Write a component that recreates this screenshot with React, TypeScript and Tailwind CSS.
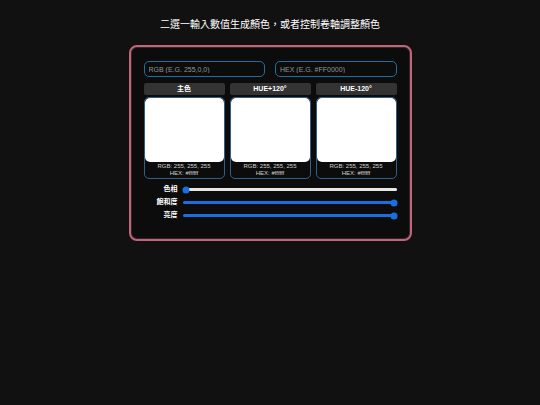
import { useState } from "react";

const FONT = { fontFamily: '"Liberation Sans", "Noto Sans CJK TC", sans-serif' };

interface Swatch {
    label: string;
    rgb: [number, number, number];
}

function toHex([r, g, b]: [number, number, number]) {
    return "#" + [r, g, b].map((v) => v.toString(16).padStart(2, "0")).join("");
}

function ColorCard({ swatch }: { swatch: Swatch }) {
    return (
        <div className="flex flex-col gap-[2px]">
            <div className="h-[12px] rounded-[2px] bg-[#333333] flex items-center justify-center text-[7px] font-bold text-white">
                {swatch.label}
            </div>
            <div className="h-[82px] rounded-[5px] border border-[#325e8a] flex flex-col">
                <div className="h-[64px] rounded-[5px] bg-white" style={{ backgroundColor: toHex(swatch.rgb) }} />
                <div className="flex-1 flex flex-col items-center justify-center text-[6px] leading-[7px] text-[#d0d0d0]">
                    <div>RGB: {swatch.rgb.join(", ")}</div>
                    <div>HEX: {toHex(swatch.rgb)}</div>
                </div>
            </div>
        </div>
    );
}

function Slider({ label, value, light }: { label: string; value: number; light?: boolean }) {
    return (
        <div className="flex items-center h-[13px]">
            <div className="w-[54px] pr-[5px] text-right text-[7px] font-semibold text-white">{label}</div>
            <div className="relative flex-1 h-[3px] rounded-full bg-[#1a6ee0]">
                {light && (
                    <div className="absolute inset-0 rounded-full bg-[#e6e6e6]" style={{ left: `${value}%` }} />
                )}
                <div
                    className="absolute top-1/2 w-[7px] h-[7px] -translate-x-1/2 -translate-y-1/2 rounded-full bg-[#1a6ee0]"
                    style={{ left: `calc(${value}% + ${value === 0 ? 3 : -3}px)` }}
                />
            </div>
        </div>
    );
}

export default function App() {
    const [rgb] = useState<[number, number, number]>([255, 255, 255]);
    const swatches: Swatch[] = [
        { label: "主色", rgb },
        { label: "HUE+120°", rgb },
        { label: "HUE-120°", rgb },
    ];

    return (
        <div className="min-h-[405px] bg-[#111111] flex flex-col items-center pt-[17px]" style={FONT}>
            <h1 className="text-[10px] leading-[16px] text-white">二選一輸入數值生成顏色，或者控制卷軸調整顏色</h1>
            <div className="mt-[12px] w-[283px] rounded-[8px] border-2 border-[#c4637a] bg-[#0c0c0c] px-[13px] pt-[14px] pb-[17px] shadow-[inset_0_0_0_1px_#2a2a2a]">
                <div className="grid grid-cols-2 gap-[10px]">
                    <input
                        className="h-[16px] rounded-[5px] border-[1.5px] border-[#1f6f9c] bg-transparent px-[4px] text-[7px] text-white placeholder:text-[#959595] outline-none"
                        placeholder="RGB (E.G. 255,0,0)"
                    />
                    <input
                        className="h-[16px] rounded-[5px] border-[1.5px] border-[#1f6f9c] bg-transparent px-[4px] text-[7px] text-white placeholder:text-[#959595] outline-none"
                        placeholder="HEX (E.G. #FF0000)"
                    />
                </div>
                <div className="mt-[6px] grid grid-cols-3 gap-[5px]">
                    {swatches.map((s) => (
                        <ColorCard key={s.label} swatch={s} />
                    ))}
                </div>
                <div className="mt-[4px] -ml-[15px] flex flex-col">
                    <Slider label="色相" value={0} light />
                    <Slider label="飽和度" value={100} />
                    <Slider label="亮度" value={100} />
                </div>
            </div>
        </div>
    );
}
